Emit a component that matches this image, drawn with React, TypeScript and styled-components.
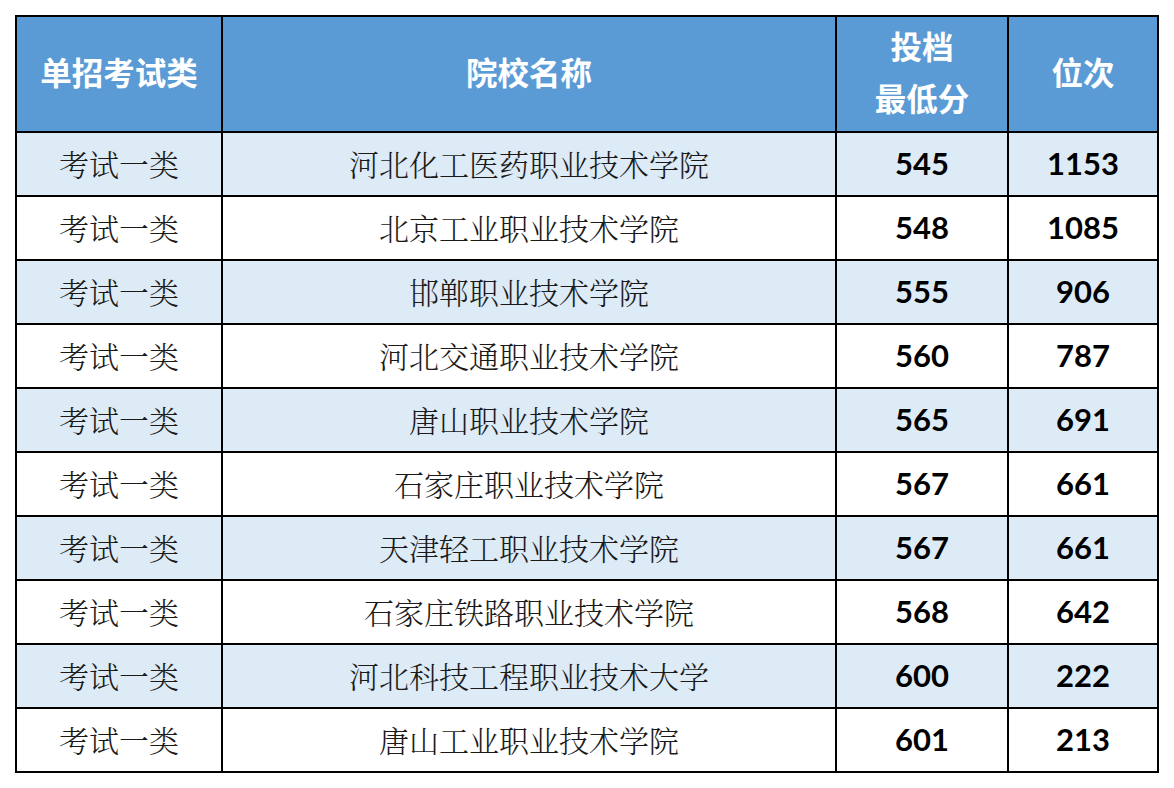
import React from "react";
import styled, { createGlobalStyle } from "styled-components";

const Global = createGlobalStyle`
  html, body { margin: 0; padding: 0; background: #ffffff; }
  body { width: 1174px; height: 788px; overflow: hidden; }
`;

const Page = styled.div`
  padding: 15px 0 0 15px;
`;

const Grid = styled.div`
  display: grid;
  width: 1144px;
  grid-template-columns: 204px 612px 170px 148px;
  grid-template-rows: 114px repeat(10, 62px);
  gap: 2px;
  padding: 2px;
  box-sizing: border-box;
  background: #000000;
`;

const HeadCell = styled.div`
  background: #5b9bd5;
  color: #ffffff;
  display: flex;
  align-items: center;
  justify-content: center;
  text-align: center;
  font-family: "Noto Sans CJK SC", "Noto Sans", sans-serif;
  font-weight: 700;
  font-size: 31.5px;
  line-height: 52px;
  padding-bottom: 7px;
  box-sizing: border-box;
`;

const Cell = styled.div<{ $shade: boolean }>`
  background: ${(p) => (p.$shade ? "#ddebf7" : "#ffffff")};
  display: flex;
  align-items: center;
  justify-content: center;
  color: #1a1a1a;
  box-sizing: border-box;
`;

const TextCell = styled(Cell)`
  font-family: "Noto Serif CJK SC", "Liberation Serif", "Noto Sans CJK SC", serif;
  font-weight: 300;
  font-size: 30px;
  padding-bottom: 2px;
`;

const NumCell = styled(Cell)`
  font-family: Lato, "Open Sans", sans-serif;
  font-weight: 700;
  font-size: 31px;
  color: #000000;
  padding-bottom: 3px;
`;

const rows: [string, string, string, string][] = [
  ["考试一类", "河北化工医药职业技术学院", "545", "1153"],
  ["考试一类", "北京工业职业技术学院", "548", "1085"],
  ["考试一类", "邯郸职业技术学院", "555", "906"],
  ["考试一类", "河北交通职业技术学院", "560", "787"],
  ["考试一类", "唐山职业技术学院", "565", "691"],
  ["考试一类", "石家庄职业技术学院", "567", "661"],
  ["考试一类", "天津轻工职业技术学院", "567", "661"],
  ["考试一类", "石家庄铁路职业技术学院", "568", "642"],
  ["考试一类", "河北科技工程职业技术大学", "600", "222"],
  ["考试一类", "唐山工业职业技术学院", "601", "213"],
];

export default function App() {
  return (
    <Page>
      <Global />
      <Grid>
        <HeadCell>单招考试类</HeadCell>
        <HeadCell>院校名称</HeadCell>
        <HeadCell>
          投档
          <br />
          最低分
        </HeadCell>
        <HeadCell>位次</HeadCell>
        {rows.map((r, i) => {
          const shade = i % 2 === 0;
          return (
            <React.Fragment key={i}>
              <TextCell $shade={shade}>{r[0]}</TextCell>
              <TextCell $shade={shade}>{r[1]}</TextCell>
              <NumCell $shade={shade}>{r[2]}</NumCell>
              <NumCell $shade={shade}>{r[3]}</NumCell>
            </React.Fragment>
          );
        })}
      </Grid>
    </Page>
  );
}
